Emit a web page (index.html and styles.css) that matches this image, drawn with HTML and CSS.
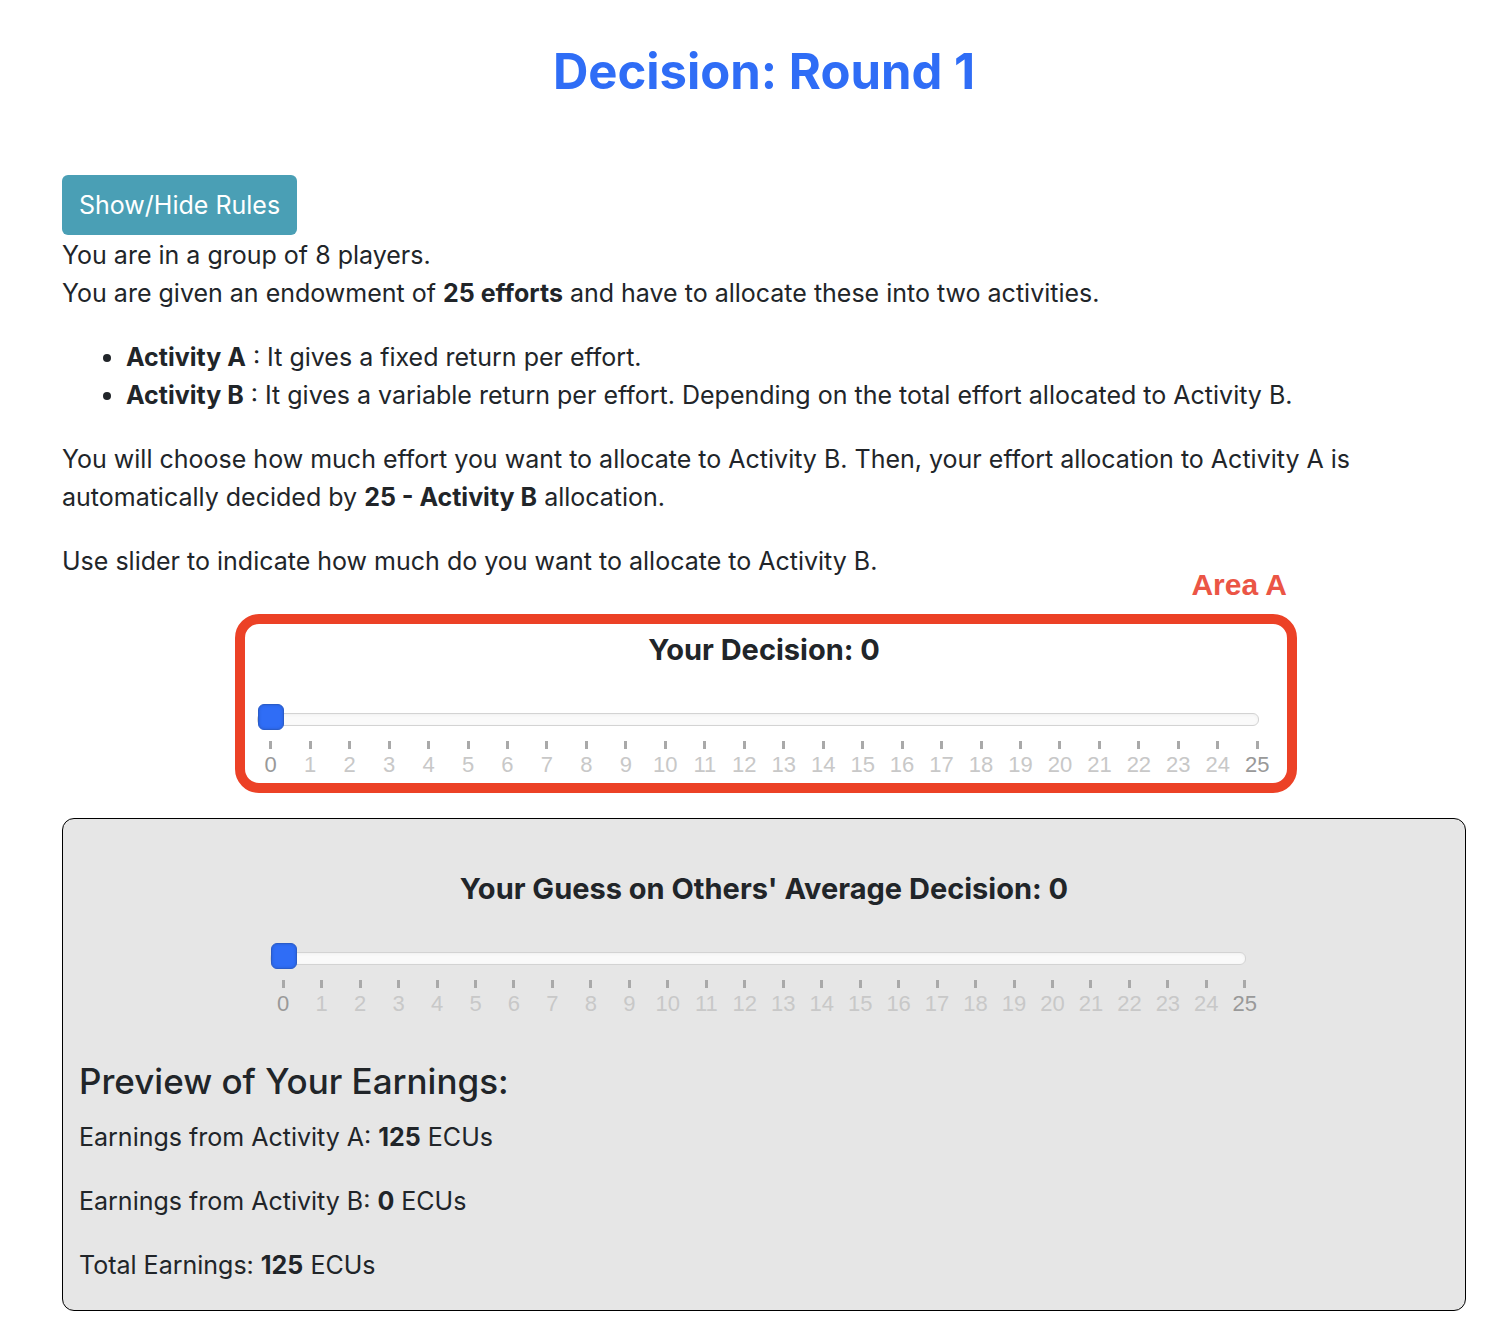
FILE: index.html
```html
<!DOCTYPE html>
<html lang="en">
<head>
<meta charset="utf-8">
<meta name="viewport" content="width=device-width, initial-scale=1">
<title>Decision: Round 1</title>
<link rel="stylesheet" href="styles.css">
</head>
<body>
<main class="page">
  <h1 class="title">Decision: Round 1</h1>
  <button type="button" class="rules-button">Show/Hide Rules</button>
  <p class="text">You are in a group of 8 players.<br>You are given an endowment of <b>25 efforts</b> and have to allocate these into two activities.</p>
  <ul class="activities">
    <li><b>Activity A</b> : It gives a fixed return per effort.</li>
    <li><b>Activity B</b> : It gives a variable return per effort. Depending on the total effort allocated to Activity B.</li>
  </ul>
  <p class="text">You will choose how much effort you want to allocate to Activity B. Then, your effort allocation to Activity A is automatically decided by <b>25 - Activity B</b> allocation.</p>
  <p class="text">Use slider to indicate how much do you want to allocate to Activity B.</p>

  <section class="decision">
    <span class="area-label">Area A</span>
    <label class="slider-label" for="decision">Your Decision: <b>0</b></label>
    <input class="slider" id="decision" type="range" min="0" max="25" value="0">
    <div class="scale"></div>
  </section>

  <section class="preview">
    <div class="guess">
      <label class="slider-label" for="guess">Your Guess on Others' Average Decision: <b>0</b></label>
      <input class="slider" id="guess" type="range" min="0" max="25" value="0">
      <div class="scale"></div>
    </div>
    <h2 class="preview-title">Preview of Your Earnings:</h2>
    <p class="text">Earnings from Activity A: <b>125</b> ECUs</p>
    <p class="text">Earnings from Activity B: <b>0</b> ECUs</p>
    <p class="text">Total Earnings: <b>125</b> ECUs</p>
  </section>
</main>
<script src="scale.js"></script>
</body>
</html>
```
FILE: styles.css
```css
* { box-sizing: border-box; }

body {
  margin: 0;
  background: #fff;
  color: #212529;
  font: 25px/38px Inter, "Liberation Sans", sans-serif;
}

b { font-weight: 700; }

.page { padding: 42px 38px 20px 62px; }

.title {
  margin: 0 0 73px;
  color: #2f6df6;
  font-size: 49px;
  line-height: 60px;
  font-weight: 700;
  text-align: center;
}

.rules-button {
  display: block;
  margin: 0 0 1px;
  padding: 11px 17px;
  border: 0;
  border-radius: 6px;
  background: #4a9fb5;
  color: #fff;
  font: inherit;
}

.text { margin: 0 0 26px; }

.activities { margin: 0 0 26px; padding-left: 64px; }

.decision {
  position: relative;
  display: flex;
  flex-direction: column;
  margin: 34px 169px 25px 173px;
  padding: 7px 28px 2px 12px;
  border: 10px solid #ec4126;
  border-radius: 24px;
}

.area-label {
  position: absolute;
  right: 0;
  top: -58px;
  color: #eb5545;
  font: 700 30px/38px "Liberation Sans", sans-serif;
}

.slider-label {
  margin: 0 -18px 0 -6px;
  font-size: 29px;
  line-height: 38px;
  font-weight: 700;
  text-align: center;
}

.slider {
  appearance: none;
  width: 100%;
  height: 26px;
  margin: 37px 0 9px;
  background: none;
}

.slider::-webkit-slider-runnable-track {
  height: 13px;
  border: 1px solid #d3d3d3;
  border-radius: 6px;
  background: #fafafa;
  box-shadow: inset 0 1px 3px #f0f0f0;
}

.slider::-webkit-slider-thumb {
  appearance: none;
  width: 26px;
  height: 26px;
  margin-top: -10px;
  border: 1px solid #2a5cc9;
  border-radius: 6px;
  background: #2f6df6;
  box-shadow: inset 0 0 3px #2a5cc9;
}

.scale {
  display: grid;
  grid-template-columns: repeat(26, minmax(0, 1fr));
  margin: 0 -18px 0 -6px;
  color: #c8c8c8;
  font: 22px/32px "Liberation Sans", sans-serif;
}

.tick { display: flex; flex-direction: column; align-items: center; }
.tick::before { content: ""; width: 3px; height: 8px; background: #a9a9a9; }
.tick-end { color: #999; }

.preview {
  padding: 51px 16px 0;
  border: 1px solid #000;
  border-radius: 12px;
  background: #e6e6e6;
}

.guess {
  display: flex;
  flex-direction: column;
  width: 73%;
  margin: 0 auto 37px;
  padding: 0 18px 0 6px;
}

.preview-title {
  margin: 0 0 13px;
  font-size: 35px;
  line-height: 48px;
  font-weight: 500;
}
```
FILE: scale.js
```js
document.querySelectorAll(".scale").forEach((scale) => {
  for (let value = 0; value <= 25; value++) {
    const tick = document.createElement("span");
    tick.className = value % 25 === 0 ? "tick tick-end" : "tick";
    tick.textContent = value;
    scale.append(tick);
  }
});
```
